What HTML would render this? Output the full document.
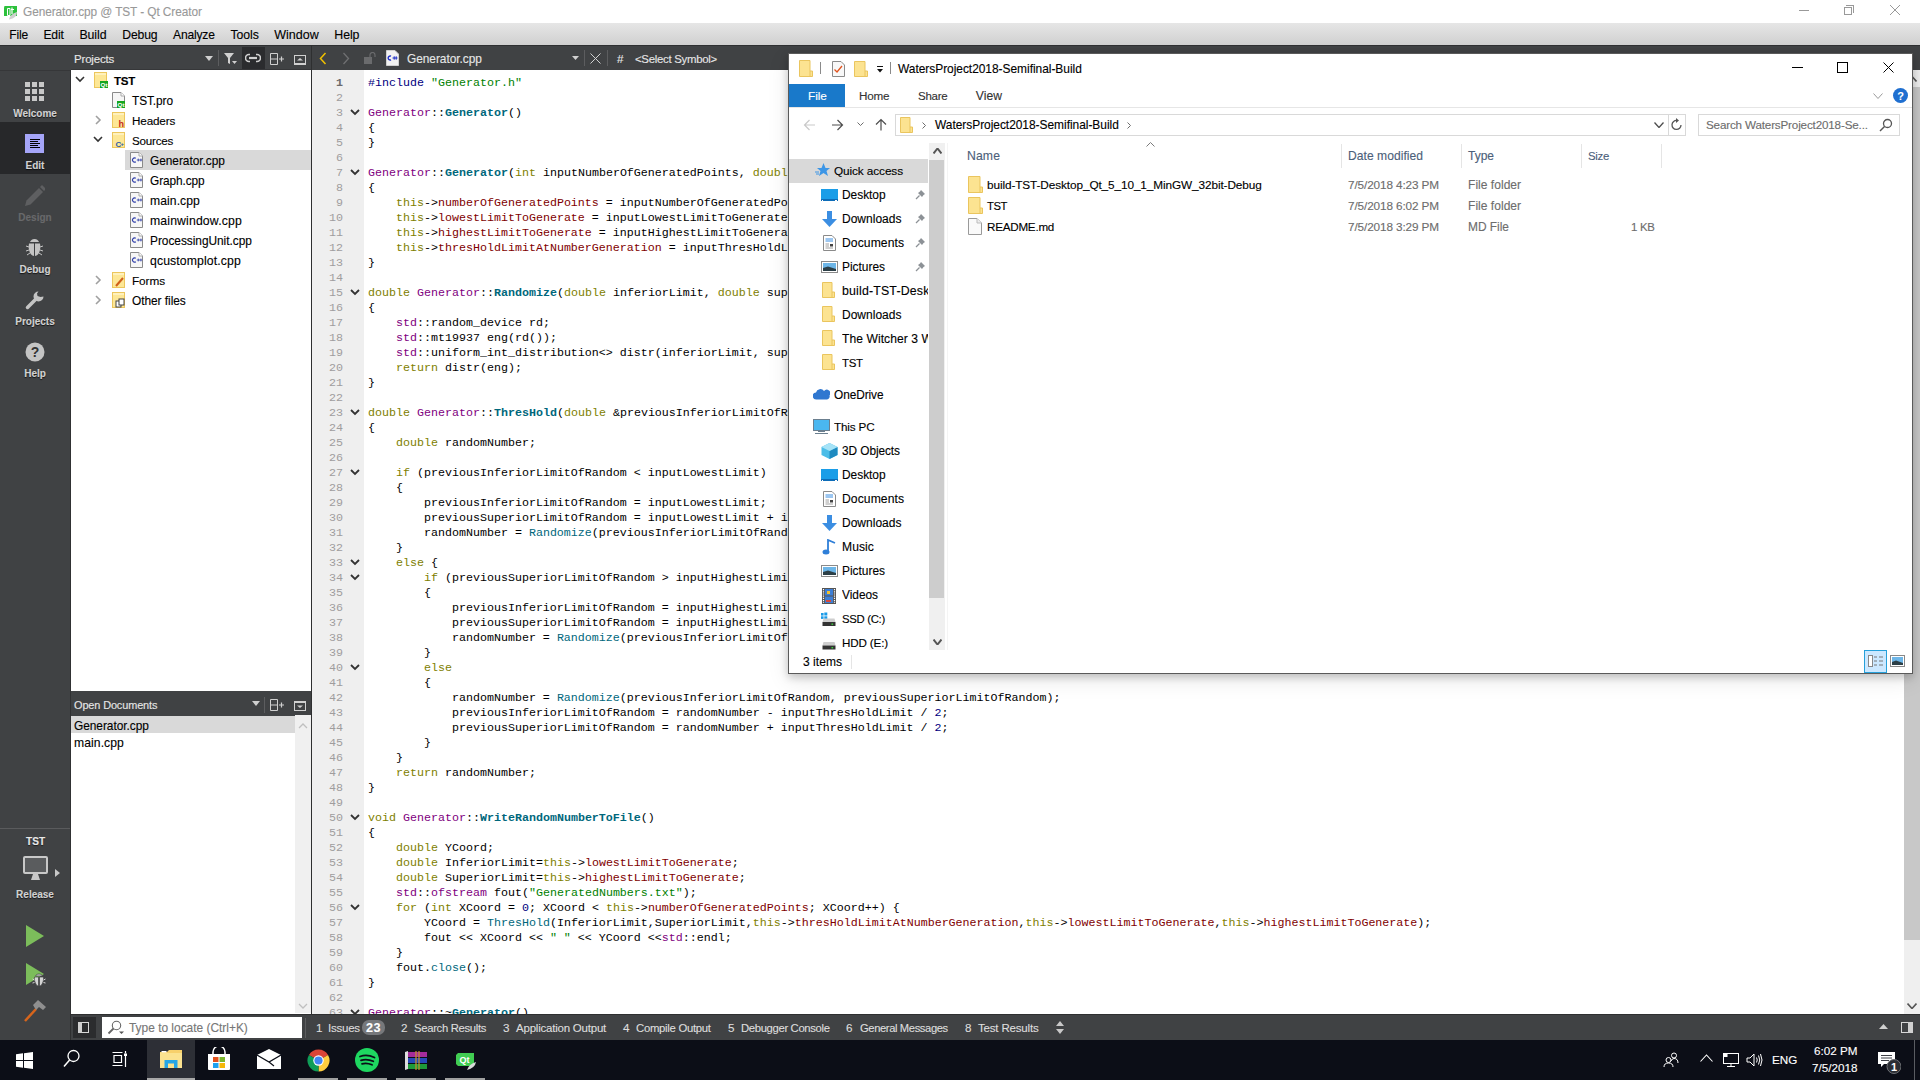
<!DOCTYPE html>
<html><head><meta charset="utf-8"><title>Qt Creator</title><style>
*{margin:0;padding:0;box-sizing:border-box}
html,body{width:1920px;height:1080px;overflow:hidden;background:#404244;font-family:"Liberation Sans",sans-serif;font-size:12px;position:relative}
.a{position:absolute}
.t{position:absolute;white-space:pre;line-height:1;-webkit-text-stroke:0.12px currentColor}
/* title & menu */
#title{left:0;top:0;width:1920px;height:23px;background:#fff}
#menu{left:0;top:23px;width:1920px;height:23px;background:linear-gradient(#e6e6e6,#d0d0d0);border-bottom:1px solid #2f3032}
#menu .t{top:5px;font-size:12.5px;color:#000}
/* dark toolbars */
#tb{left:0;top:46px;width:1920px;height:24px;background:#404244}
#modebar{left:0;top:70px;width:71px;height:944px;background:#404244;border-top:1px solid #363739}
.mode{position:absolute;left:0;width:70px;text-align:center;color:#cfcfcf;font-weight:bold;font-size:11px}
/* projects */
#proj{left:71px;top:70px;width:240px;height:621px;background:#fff}
.tr{position:absolute;font-size:12.5px;color:#000;white-space:pre;line-height:1}
#odhdr{left:71px;top:691px;width:240px;height:24px;background:#404244}
#od{left:71px;top:716px;width:240px;height:298px;background:#fff}
#split{left:311px;top:70px;width:1px;height:944px;background:#2e2f30}
/* editor */
#gutter{left:312px;top:70px;width:52px;height:944px;background:#efefef}
#editor{left:364px;top:70px;width:1540px;height:944px;background:#fff;overflow:hidden}
#lnums{position:absolute;left:313px;top:76px;width:30px;text-align:right;font-family:"Liberation Mono",monospace;font-size:11.67px;line-height:15px;color:#9f9d9e;white-space:pre}
#code{position:absolute;left:368px;top:76px;font-family:"Liberation Mono",monospace;font-size:11.67px;line-height:15px;color:#000;white-space:pre}
.k{color:#808000}.c{color:#800080}.fd{color:#00677c;font-weight:bold}.fc{color:#00677c}.fl{color:#800000}.s{color:#008000}.p{color:#000080}.n{color:#000080}
#vscroll{left:1904px;top:70px;width:16px;height:944px;background:#efefef}
/* status bar */
#status{left:70px;top:1014px;width:1850px;height:26px;background:#404244;border-top:1px solid #2e2f30;border-left:1px solid #2e2f30}
#status .t{color:#e0e0e0;font-size:12px;top:9px}
/* taskbar */
#taskbar{left:0;top:1040px;width:1920px;height:40px;background:#0c0e17}
/* explorer */
#exp{left:788px;top:53px;width:1125px;height:621px;background:#fff;border:1px solid #5a5a5a;box-shadow:0 3px 8px rgba(0,0,0,.2),0 6px 20px rgba(0,0,0,.1)}
#exp .t{color:#000;font-size:12px}

</style></head><body>
<div id="title" class="a"></div>
<svg class="a" style="left:3px;top:6px;" width="15" height="14" viewBox="0 0 15 14"><path d="M1.5 0H14V10H1V1.5Z" fill="#2dc13c"/><path d="M4.5 2.5H7V9.5H4.5Z" stroke="#fff" stroke-width="1" fill="none"/><path d="M9 1.5V8M8 3.5H11" stroke="#fff" stroke-width="1.2"/><path d="M6 13.5Q7 8 14 6Q14 12 6 13.5Z" fill="#cfcfcf"/></svg>
<div class="t" style="left:23px;top:7.00px;font-size:11.85px;color:#999;letter-spacing:-0.082px;">Generator.cpp @ TST - Qt Creator</div>
<div class="a" style="left:1799px;top:10px;width:10px;height:1px;background:#999;"></div>
<div class="a" style="left:1844px;top:7px;width:8px;height:8px;border:1px solid #999"></div>
<div class="a" style="left:1846px;top:5px;width:8px;height:8px;border-top:1px solid #999;border-right:1px solid #999"></div>
<svg class="a" style="left:1889px;top:4px" width="12" height="12"><path d="M1 1L11 11M11 1L1 11" stroke="#999" stroke-width="1"/></svg>
<div id="menu" class="a"></div>
<div class="t" style="left:9.2px;top:29.00px;font-size:12.05px;color:#000;letter-spacing:-0.163px;">File</div>
<div class="t" style="left:43.4px;top:29.00px;font-size:12.15px;color:#000;letter-spacing:-0.152px;">Edit</div>
<div class="t" style="left:79.4px;top:29.00px;font-size:12.35px;color:#000;letter-spacing:-0.06px;">Build</div>
<div class="t" style="left:122.3px;top:29.00px;font-size:12.2px;color:#000;letter-spacing:-0.164px;">Debug</div>
<div class="t" style="left:173px;top:29.00px;font-size:12.1px;color:#000;letter-spacing:-0.185px;">Analyze</div>
<div class="t" style="left:230.6px;top:29.00px;font-size:12.25px;color:#000;letter-spacing:-0.109px;">Tools</div>
<div class="t" style="left:274.2px;top:29.00px;font-size:12.5px;color:#000;letter-spacing:0.002px;">Window</div>
<div class="t" style="left:334.3px;top:29.00px;font-size:12.35px;color:#000;letter-spacing:-0.073px;">Help</div>
<div id="tb" class="a"></div>
<div id="modebar" class="a"></div>
<div class="t" style="left:74px;top:54.00px;font-size:11.55px;color:#e6e6e6;letter-spacing:-0.203px;">Projects</div>
<div id="proj" class="a"></div>
<div class="a" style="left:125px;top:150px;width:186px;height:20px;background:#d9d9d9;"></div>
<div class="t" style="left:114px;top:76.00px;font-size:11.55px;color:#000;font-weight:700;letter-spacing:-0.266px;">TST</div>
<svg class="a" style="left:94px;top:72px;" width="14" height="17" viewBox="0 0 14 17"><rect x="0.5" y="0.5" width="12" height="15" fill="#fde796" stroke="#ecc65c"/><rect x="1" y="1" width="11" height="2" fill="#fff1bd"/><rect x="6" y="9" width="8" height="7" fill="#16a51e"/><text x="6.6" y="15" font-family="Liberation Sans" font-size="6.2" font-weight="bold" fill="#fff">Qt</text></svg>
<svg class="a" style="left:75px;top:76px" width="10" height="7"><path d="M1 1L5 5L9 1" stroke="#333" stroke-width="1.6" fill="none"/></svg>
<div class="t" style="left:132px;top:96.00px;font-size:11.85px;color:#000;letter-spacing:-0.076px;">TST.pro</div>
<svg class="a" style="left:112px;top:92px;" width="14" height="17" viewBox="0 0 14 17"><path d="M0.5 0.5H9L12.5 4V15.5H0.5Z" fill="#f6f6f6" stroke="#8a8a8a"/><path d="M9 0.5V4H12.5" fill="#fff" stroke="#aaa"/><rect x="5" y="9" width="8" height="7" fill="#16a51e"/><text x="5.6" y="15" font-family="Liberation Sans" font-size="6.2" font-weight="bold" fill="#fff">Qt</text></svg>
<div class="t" style="left:132px;top:115.00px;font-size:11.7px;color:#000;letter-spacing:-0.156px;">Headers</div>
<svg class="a" style="left:112px;top:112px;" width="14" height="17" viewBox="0 0 14 17"><rect x="0.5" y="0.5" width="12" height="15" fill="#fde796" stroke="#ecc65c"/><rect x="1" y="1" width="11" height="2" fill="#fff1bd"/><text x="6.5" y="15" font-family="Liberation Sans" font-size="9" font-weight="bold" fill="#c62a20">h</text></svg>
<svg class="a" style="left:95px;top:115px" width="7" height="10"><path d="M1 1L5 5L1 9" stroke="#a0a0a0" stroke-width="1.6" fill="none"/></svg>
<div class="t" style="left:132px;top:135.00px;font-size:11.6px;color:#000;letter-spacing:-0.212px;">Sources</div>
<svg class="a" style="left:112px;top:132px;" width="14" height="17" viewBox="0 0 14 17"><rect x="0.5" y="0.5" width="12" height="15" fill="#fde796" stroke="#ecc65c"/><rect x="1" y="1" width="11" height="2" fill="#fff1bd"/><text x="3.5" y="15" font-family="Liberation Sans" font-size="8" font-weight="bold" fill="#2f5aa8">C</text><text x="8.5" y="13.5" font-family="Liberation Sans" font-size="6" font-weight="bold" fill="#2f5aa8">+</text></svg>
<svg class="a" style="left:93px;top:136px" width="10" height="7"><path d="M1 1L5 5L9 1" stroke="#333" stroke-width="1.6" fill="none"/></svg>
<div class="t" style="left:150px;top:156.00px;font-size:11.9px;color:#000;letter-spacing:-0.038px;">Generator.cpp</div>
<svg class="a" style="left:130px;top:152px;" width="14" height="17" viewBox="0 0 14 17"><path d="M0.5 0.5H9L12.5 4V15.5H0.5Z" fill="#f6f6f6" stroke="#8a8a8a"/><path d="M9 0.5V4H12.5" fill="#fff" stroke="#aaa"/><path d="M5.8 6.3A2.1 2.1 0 1 0 5.8 9.7" stroke="#2d3ca8" stroke-width="1.2" fill="none"/><path d="M6.8 8H12.2M8.3 6.6V9.4M10.9 6.6V9.4" stroke="#2d3ca8" stroke-width="0.8"/></svg>
<div class="t" style="left:150px;top:176.00px;font-size:11.85px;color:#000;letter-spacing:-0.075px;">Graph.cpp</div>
<svg class="a" style="left:130px;top:172px;" width="14" height="17" viewBox="0 0 14 17"><path d="M0.5 0.5H9L12.5 4V15.5H0.5Z" fill="#f6f6f6" stroke="#8a8a8a"/><path d="M9 0.5V4H12.5" fill="#fff" stroke="#aaa"/><path d="M5.8 6.3A2.1 2.1 0 1 0 5.8 9.7" stroke="#2d3ca8" stroke-width="1.2" fill="none"/><path d="M6.8 8H12.2M8.3 6.6V9.4M10.9 6.6V9.4" stroke="#2d3ca8" stroke-width="0.8"/></svg>
<div class="t" style="left:150px;top:195.00px;font-size:12.15px;color:#000;letter-spacing:0.082px;">main.cpp</div>
<svg class="a" style="left:130px;top:192px;" width="14" height="17" viewBox="0 0 14 17"><path d="M0.5 0.5H9L12.5 4V15.5H0.5Z" fill="#f6f6f6" stroke="#8a8a8a"/><path d="M9 0.5V4H12.5" fill="#fff" stroke="#aaa"/><path d="M5.8 6.3A2.1 2.1 0 1 0 5.8 9.7" stroke="#2d3ca8" stroke-width="1.2" fill="none"/><path d="M6.8 8H12.2M8.3 6.6V9.4M10.9 6.6V9.4" stroke="#2d3ca8" stroke-width="0.8"/></svg>
<div class="t" style="left:150px;top:215.00px;font-size:12.25px;color:#000;letter-spacing:0.14px;">mainwindow.cpp</div>
<svg class="a" style="left:130px;top:212px;" width="14" height="17" viewBox="0 0 14 17"><path d="M0.5 0.5H9L12.5 4V15.5H0.5Z" fill="#f6f6f6" stroke="#8a8a8a"/><path d="M9 0.5V4H12.5" fill="#fff" stroke="#aaa"/><path d="M5.8 6.3A2.1 2.1 0 1 0 5.8 9.7" stroke="#2d3ca8" stroke-width="1.2" fill="none"/><path d="M6.8 8H12.2M8.3 6.6V9.4M10.9 6.6V9.4" stroke="#2d3ca8" stroke-width="0.8"/></svg>
<div class="t" style="left:150px;top:236.00px;font-size:11.9px;color:#000;letter-spacing:-0.033px;">ProcessingUnit.cpp</div>
<svg class="a" style="left:130px;top:232px;" width="14" height="17" viewBox="0 0 14 17"><path d="M0.5 0.5H9L12.5 4V15.5H0.5Z" fill="#f6f6f6" stroke="#8a8a8a"/><path d="M9 0.5V4H12.5" fill="#fff" stroke="#aaa"/><path d="M5.8 6.3A2.1 2.1 0 1 0 5.8 9.7" stroke="#2d3ca8" stroke-width="1.2" fill="none"/><path d="M6.8 8H12.2M8.3 6.6V9.4M10.9 6.6V9.4" stroke="#2d3ca8" stroke-width="0.8"/></svg>
<div class="t" style="left:150px;top:255.00px;font-size:12.25px;color:#000;letter-spacing:0.115px;">qcustomplot.cpp</div>
<svg class="a" style="left:130px;top:252px;" width="14" height="17" viewBox="0 0 14 17"><path d="M0.5 0.5H9L12.5 4V15.5H0.5Z" fill="#f6f6f6" stroke="#8a8a8a"/><path d="M9 0.5V4H12.5" fill="#fff" stroke="#aaa"/><path d="M5.8 6.3A2.1 2.1 0 1 0 5.8 9.7" stroke="#2d3ca8" stroke-width="1.2" fill="none"/><path d="M6.8 8H12.2M8.3 6.6V9.4M10.9 6.6V9.4" stroke="#2d3ca8" stroke-width="0.8"/></svg>
<div class="t" style="left:132px;top:276.00px;font-size:11.8px;color:#000;letter-spacing:-0.094px;">Forms</div>
<svg class="a" style="left:112px;top:272px;" width="14" height="17" viewBox="0 0 14 17"><rect x="0.5" y="0.5" width="12" height="15" fill="#fde796" stroke="#ecc65c"/><rect x="1" y="1" width="11" height="2" fill="#fff1bd"/><path d="M4 14L11 6" stroke="#d0601a" stroke-width="2"/></svg>
<svg class="a" style="left:95px;top:275px" width="7" height="10"><path d="M1 1L5 5L1 9" stroke="#a0a0a0" stroke-width="1.6" fill="none"/></svg>
<div class="t" style="left:132px;top:296.00px;font-size:11.9px;color:#000;letter-spacing:-0.039px;">Other files</div>
<svg class="a" style="left:112px;top:292px;" width="14" height="17" viewBox="0 0 14 17"><rect x="0.5" y="0.5" width="12" height="15" fill="#fde796" stroke="#ecc65c"/><rect x="1" y="1" width="11" height="2" fill="#fff1bd"/><rect x="4" y="9" width="5" height="6" fill="#fff" stroke="#444" stroke-width="1"/><rect x="7" y="7" width="5" height="6" fill="#fff" stroke="#444" stroke-width="1"/></svg>
<svg class="a" style="left:95px;top:295px" width="7" height="10"><path d="M1 1L5 5L1 9" stroke="#a0a0a0" stroke-width="1.6" fill="none"/></svg>
<div id="odhdr" class="a"></div>
<div class="t" style="left:74px;top:700.00px;font-size:10.95px;color:#e6e6e6;letter-spacing:-0.129px;">Open Documents</div>
<div id="od" class="a"></div>
<div class="a" style="left:71px;top:716px;width:224px;height:17px;background:#d9d9d9;"></div>
<div class="t" style="left:74px;top:721.00px;font-size:11.9px;color:#000;letter-spacing:-0.038px;">Generator.cpp</div>
<div class="t" style="left:74px;top:737.00px;font-size:12.15px;color:#000;letter-spacing:0.082px;">main.cpp</div>
<div class="a" style="left:295px;top:715px;width:16px;height:298px;background:#f0f0f0;"></div>
<div id="split" class="a"></div>
<div class="a" style="left:70px;top:70px;width:1px;height:944px;background:#303133;"></div>
<div id="gutter" class="a"></div>
<div id="editor" class="a"></div>
<div id="lnums"><b style="color:#6d6b6c">1</b>
2
3
4
5
6
7
8
9
10
11
12
13
14
15
16
17
18
19
20
21
22
23
24
25
26
27
28
29
30
31
32
33
34
35
36
37
38
39
40
41
42
43
44
45
46
47
48
49
50
51
52
53
54
55
56
57
58
59
60
61
62
63</div>
<svg class="a" style="left:350px;top:109px;" width="10" height="7" viewBox="0 0 10 7"><path d="M1 1L5 5L9 1" stroke="#333" stroke-width="1.8" fill="none"/></svg><svg class="a" style="left:350px;top:169px;" width="10" height="7" viewBox="0 0 10 7"><path d="M1 1L5 5L9 1" stroke="#333" stroke-width="1.8" fill="none"/></svg><svg class="a" style="left:350px;top:289px;" width="10" height="7" viewBox="0 0 10 7"><path d="M1 1L5 5L9 1" stroke="#333" stroke-width="1.8" fill="none"/></svg><svg class="a" style="left:350px;top:409px;" width="10" height="7" viewBox="0 0 10 7"><path d="M1 1L5 5L9 1" stroke="#333" stroke-width="1.8" fill="none"/></svg><svg class="a" style="left:350px;top:469px;" width="10" height="7" viewBox="0 0 10 7"><path d="M1 1L5 5L9 1" stroke="#333" stroke-width="1.8" fill="none"/></svg><svg class="a" style="left:350px;top:559px;" width="10" height="7" viewBox="0 0 10 7"><path d="M1 1L5 5L9 1" stroke="#333" stroke-width="1.8" fill="none"/></svg><svg class="a" style="left:350px;top:574px;" width="10" height="7" viewBox="0 0 10 7"><path d="M1 1L5 5L9 1" stroke="#333" stroke-width="1.8" fill="none"/></svg><svg class="a" style="left:350px;top:664px;" width="10" height="7" viewBox="0 0 10 7"><path d="M1 1L5 5L9 1" stroke="#333" stroke-width="1.8" fill="none"/></svg><svg class="a" style="left:350px;top:814px;" width="10" height="7" viewBox="0 0 10 7"><path d="M1 1L5 5L9 1" stroke="#333" stroke-width="1.8" fill="none"/></svg><svg class="a" style="left:350px;top:904px;" width="10" height="7" viewBox="0 0 10 7"><path d="M1 1L5 5L9 1" stroke="#333" stroke-width="1.8" fill="none"/></svg><svg class="a" style="left:350px;top:1009px;" width="10" height="7" viewBox="0 0 10 7"><path d="M1 1L5 5L9 1" stroke="#333" stroke-width="1.8" fill="none"/></svg>
<div id="code"><span class="p">#include</span> <span class="s">&quot;Generator.h&quot;</span>

<span class="c">Generator</span>::<span class="fd">Generator</span>()
{
}

<span class="c">Generator</span>::<span class="fd">Generator</span>(<span class="k">int</span> inputNumberOfGeneratedPoints, <span class="k">double</span> inputLowestLimitToGenerate, <span class="k">double</span> inputHighestLimitToGenerate)
{
    <span class="k">this</span>-&gt;<span class="fl">numberOfGeneratedPoints</span> = inputNumberOfGeneratedPoints;
    <span class="k">this</span>-&gt;<span class="fl">lowestLimitToGenerate</span> = inputLowestLimitToGenerate;
    <span class="k">this</span>-&gt;<span class="fl">highestLimitToGenerate</span> = inputHighestLimitToGenerate;
    <span class="k">this</span>-&gt;<span class="fl">thresHoldLimitAtNumberGeneration</span> = inputThresHoldLimit;
}

<span class="k">double</span> <span class="c">Generator</span>::<span class="fd">Randomize</span>(<span class="k">double</span> inferiorLimit, <span class="k">double</span> superiorLimit)
{
    <span class="c">std</span>::random_device rd;
    <span class="c">std</span>::mt19937 eng(rd());
    <span class="c">std</span>::uniform_int_distribution&lt;&gt; distr(inferiorLimit, superiorLimit);
    <span class="k">return</span> distr(eng);
}

<span class="k">double</span> <span class="c">Generator</span>::<span class="fd">ThresHold</span>(<span class="k">double</span> &amp;previousInferiorLimitOfRandom, <span class="k">double</span> &amp;previousSuperiorLimitOfRandom)
{
    <span class="k">double</span> randomNumber;

    <span class="k">if</span> (previousInferiorLimitOfRandom &lt; inputLowestLimit)
    {
        previousInferiorLimitOfRandom = inputLowestLimit;
        previousSuperiorLimitOfRandom = inputLowestLimit + inputThresHoldLimit;
        randomNumber = <span class="fc">Randomize</span>(previousInferiorLimitOfRandom, previousSuperiorLimitOfRandom);
    }
    <span class="k">else</span> {
        <span class="k">if</span> (previousSuperiorLimitOfRandom &gt; inputHighestLimit)
        {
            previousInferiorLimitOfRandom = inputHighestLimit - inputThresHoldLimit;
            previousSuperiorLimitOfRandom = inputHighestLimit;
            randomNumber = <span class="fc">Randomize</span>(previousInferiorLimitOfRandom, previousSuperiorLimitOfRandom);
        }
        <span class="k">else</span>
        {
            randomNumber = <span class="fc">Randomize</span>(previousInferiorLimitOfRandom, previousSuperiorLimitOfRandom);
            previousInferiorLimitOfRandom = randomNumber - inputThresHoldLimit / <span class="n">2</span>;
            previousSuperiorLimitOfRandom = randomNumber + inputThresHoldLimit / <span class="n">2</span>;
        }
    }
    <span class="k">return</span> randomNumber;
}

<span class="k">void</span> <span class="c">Generator</span>::<span class="fd">WriteRandomNumberToFile</span>()
{
    <span class="k">double</span> YCoord;
    <span class="k">double</span> InferiorLimit=<span class="k">this</span>-&gt;<span class="fl">lowestLimitToGenerate</span>;
    <span class="k">double</span> SuperiorLimit=<span class="k">this</span>-&gt;<span class="fl">highestLimitToGenerate</span>;
    <span class="c">std</span>::<span class="c">ofstream</span> fout(<span class="s">&quot;GeneratedNumbers.txt&quot;</span>);
    <span class="k">for</span> (<span class="k">int</span> XCoord = <span class="n">0</span>; XCoord &lt; <span class="k">this</span>-&gt;<span class="fl">numberOfGeneratedPoints</span>; XCoord++) {
        YCoord = <span class="fc">ThresHold</span>(InferiorLimit,SuperiorLimit,<span class="k">this</span>-&gt;<span class="fl">thresHoldLimitAtNumberGeneration</span>,<span class="k">this</span>-&gt;<span class="fl">lowestLimitToGenerate</span>,<span class="k">this</span>-&gt;<span class="fl">highestLimitToGenerate</span>);
        fout &lt;&lt; XCoord &lt;&lt; <span class="s">&quot; &quot;</span> &lt;&lt; YCoord &lt;&lt;<span class="c">std</span>::endl;
    }
    fout.<span class="fc">close</span>();
}

<span class="c">Generator</span>::~<span class="fd">Generator</span>()</div>
<div id="vscroll" class="a"></div>
<div class="a" style="left:1904px;top:87px;width:16px;height:853px;background:#c8c8c8;"></div>
<svg class="a" style="left:1907px;top:76px;" width="10" height="6" viewBox="0 0 10 6"><path d="M0.5 5.5L5.0 0.5L9.5 5.5" stroke="#555" stroke-width="1.6" fill="none"/></svg>
<div class="t" style="left:407px;top:54.00px;font-size:11.9px;color:#e6e6e6;letter-spacing:-0.038px;">Generator.cpp</div>
<div class="t" style="left:617px;top:53.00px;font-size:11.7px;color:#e6e6e6;">#</div>
<div class="t" style="left:635px;top:54.00px;font-size:11.4px;color:#e6e6e6;letter-spacing:-0.281px;">&lt;Select Symbol&gt;</div>
<div id="status" class="a"></div>
<div class="a" style="left:102px;top:1017px;width:200px;height:21px;background:#fff;"></div>
<div class="a" style="left:73px;top:1017px;width:23px;height:21px;background:#2b2c2e;"></div>
<svg class="a" style="left:78px;top:1022px;" width="11" height="11" viewBox="0 0 11 11"><rect x="0.5" y="0.5" width="10" height="10" fill="#2b2c2e" stroke="#d8d8d8"/><rect x="0" y="0" width="4" height="11" fill="#d0d0d0"/></svg>
<svg class="a" style="left:107px;top:1020px;" width="18" height="15" viewBox="0 0 18 15"><circle cx="9.5" cy="5.5" r="4.2" stroke="#666" stroke-width="1.1" fill="none"/><path d="M6.5 8.5L1.5 13.5" stroke="#666" stroke-width="1.8"/><path d="M12 11.5H17L14.5 14Z" fill="#555"/></svg>
<div class="a" style="left:305px;top:1018px;width:1px;height:20px;background:#5c5d5f;"></div>
<div class="t" style="left:129px;top:1023.00px;font-size:11.95px;color:#777;letter-spacing:-0.012px;">Type to locate (Ctrl+K)</div>
<div class="t" style="left:316px;top:1022.00px;font-size:11.7px;color:#ddd;">1</div>
<div class="t" style="left:401px;top:1022.00px;font-size:11.7px;color:#ddd;">2</div>
<div class="t" style="left:503px;top:1022.00px;font-size:11.7px;color:#ddd;">3</div>
<div class="t" style="left:623px;top:1022.00px;font-size:11.7px;color:#ddd;">4</div>
<div class="t" style="left:728px;top:1022.00px;font-size:11.7px;color:#ddd;">5</div>
<div class="t" style="left:846px;top:1022.00px;font-size:11.7px;color:#ddd;">6</div>
<div class="t" style="left:965px;top:1022.00px;font-size:11.7px;color:#ddd;">8</div>
<div class="t" style="left:328px;top:1023.00px;font-size:11.5px;color:#ddd;letter-spacing:-0.236px;">Issues</div>
<div class="t" style="left:414px;top:1023.00px;font-size:11.3px;color:#ddd;letter-spacing:-0.324px;">Search Results</div>
<div class="t" style="left:516px;top:1023.00px;font-size:11.5px;color:#ddd;letter-spacing:-0.218px;">Application Output</div>
<div class="t" style="left:636px;top:1023.00px;font-size:11.35px;color:#ddd;letter-spacing:-0.298px;">Compile Output</div>
<div class="t" style="left:741px;top:1023.00px;font-size:11.3px;color:#ddd;letter-spacing:-0.352px;">Debugger Console</div>
<div class="t" style="left:860px;top:1023.00px;font-size:11.2px;color:#ddd;letter-spacing:-0.382px;">General Messages</div>
<div class="t" style="left:978px;top:1023.00px;font-size:11.55px;color:#ddd;letter-spacing:-0.199px;">Test Results</div>
<div class="a" style="left:362px;top:1020px;width:23px;height:15px;background:#76787b;border-radius:7px"></div>
<div class="t" style="left:366px;top:1022.00px;font-size:12.6px;color:#fff;font-weight:700;letter-spacing:0.5px;">23</div>
<div id="taskbar" class="a"></div>
<div class="a" style="left:147px;top:1040px;width:48px;height:40px;background:#2d2f36;"></div>
<div class="t" style="left:1772px;top:1054.00px;font-size:11.7px;color:#fff;">ENG</div>
<div class="t" style="left:1814px;top:1045.00px;font-size:11.7px;color:#fff;">6:02 PM</div>
<div class="t" style="left:1812px;top:1062.00px;font-size:11.7px;color:#fff;">7/5/2018</div>
<div id="exp" class="a"></div>
<div class="t" style="left:898px;top:64.00px;font-size:11.95px;color:#000;letter-spacing:-0.028px;">WatersProject2018-Semifinal-Build</div>
<div class="a" style="left:789px;top:84px;width:56px;height:23px;background:#1979ca;"></div>
<div class="t" style="left:808px;top:91.00px;font-size:11.8px;color:#fff;letter-spacing:-0.066px;">File</div>
<div class="t" style="left:859px;top:90.00px;font-size:11.7px;color:#333;letter-spacing:-0.184px;">Home</div>
<div class="t" style="left:918px;top:91.00px;font-size:11.5px;color:#333;letter-spacing:-0.247px;">Share</div>
<div class="t" style="left:975.75px;top:90.00px;font-size:12.15px;color:#333;letter-spacing:0.09px;">View</div>
<div class="a" style="left:789px;top:107px;width:1123px;height:1px;background:#e6e6e6;"></div>
<div class="a" style="left:895px;top:114px;width:791px;height:22px;border:1px solid #d9d9d9"></div>
<div class="t" style="left:935px;top:120.00px;font-size:11.95px;color:#000;letter-spacing:-0.028px;">WatersProject2018-Semifinal-Build</div>
<div class="a" style="left:1698px;top:114px;width:202px;height:22px;border:1px solid #d9d9d9"></div>
<div class="t" style="left:1706px;top:119.00px;font-size:11.65px;color:#6d6d6d;letter-spacing:-0.157px;">Search WatersProject2018-Se...</div>
<div class="a" style="left:789px;top:159px;width:139px;height:24px;background:#d9d9d9;"></div>
<div class="t" style="left:834px;top:166.00px;font-size:11.8px;color:#000;letter-spacing:-0.1px;overflow:hidden;width:94px">Quick access</div>
<div class="t" style="left:842px;top:190.00px;font-size:11.95px;color:#000;letter-spacing:-0.033px;overflow:hidden;width:86px">Desktop</div>
<div class="t" style="left:842px;top:213.00px;font-size:12.0px;color:#000;letter-spacing:0.014px;overflow:hidden;width:86px">Downloads</div>
<div class="t" style="left:842px;top:237.00px;font-size:12.15px;color:#000;letter-spacing:0.073px;overflow:hidden;width:86px">Documents</div>
<div class="t" style="left:842px;top:262.00px;font-size:11.95px;color:#000;letter-spacing:-0.016px;overflow:hidden;width:86px">Pictures</div>
<div class="t" style="left:842px;top:285.00px;font-size:12.35px;color:#000;letter-spacing:0.174px;overflow:hidden;width:86px">build-TST-Deskt</div>
<div class="t" style="left:842px;top:309.00px;font-size:12.0px;color:#000;letter-spacing:0.014px;overflow:hidden;width:86px">Downloads</div>
<div class="t" style="left:842px;top:333.00px;font-size:12.1px;color:#000;letter-spacing:0.058px;overflow:hidden;width:86px">The Witcher 3 W</div>
<div class="t" style="left:842px;top:358.00px;font-size:11.45px;color:#000;letter-spacing:-0.319px;overflow:hidden;width:86px">TST</div>
<div class="t" style="left:834px;top:390.00px;font-size:11.85px;color:#000;letter-spacing:-0.074px;overflow:hidden;width:94px">OneDrive</div>
<div class="t" style="left:834px;top:421.00px;font-size:11.7px;color:#000;letter-spacing:-0.149px;overflow:hidden;width:94px">This PC</div>
<div class="t" style="left:842px;top:446.00px;font-size:11.85px;color:#000;letter-spacing:-0.067px;overflow:hidden;width:86px">3D Objects</div>
<div class="t" style="left:842px;top:470.00px;font-size:11.95px;color:#000;letter-spacing:-0.033px;overflow:hidden;width:86px">Desktop</div>
<div class="t" style="left:842px;top:493.00px;font-size:12.15px;color:#000;letter-spacing:0.073px;overflow:hidden;width:86px">Documents</div>
<div class="t" style="left:842px;top:517.00px;font-size:12.0px;color:#000;letter-spacing:0.014px;overflow:hidden;width:86px">Downloads</div>
<div class="t" style="left:842px;top:541.00px;font-size:12.1px;color:#000;letter-spacing:0.072px;overflow:hidden;width:86px">Music</div>
<div class="t" style="left:842px;top:566.00px;font-size:11.95px;color:#000;letter-spacing:-0.016px;overflow:hidden;width:86px">Pictures</div>
<div class="t" style="left:842px;top:590.00px;font-size:11.9px;color:#000;letter-spacing:-0.031px;overflow:hidden;width:86px">Videos</div>
<div class="t" style="left:842px;top:614.00px;font-size:11.35px;color:#000;letter-spacing:-0.305px;overflow:hidden;width:86px">SSD (C:)</div>
<div class="t" style="left:842px;top:637.00px;font-size:11.65px;color:#000;letter-spacing:-0.158px;overflow:hidden;width:86px">HDD (E:)</div>
<div class="a" style="left:929px;top:143px;width:16px;height:507px;background:#f0f0f0;"></div>
<div class="a" style="left:929px;top:160px;width:15px;height:438px;background:#cdcdcd;"></div>
<div class="a" style="left:947px;top:143px;width:1px;height:507px;background:#f4f4f4;"></div>
<div class="t" style="left:967px;top:150.00px;font-size:12.2px;color:#4c607a;letter-spacing:0.133px;">Name</div>
<div class="t" style="left:1348px;top:150.00px;font-size:12.1px;color:#4c607a;letter-spacing:0.035px;">Date modified</div>
<div class="t" style="left:1468px;top:150.00px;font-size:12.0px;color:#4c607a;letter-spacing:-0.004px;">Type</div>
<div class="t" style="left:1588px;top:151.00px;font-size:11.4px;color:#4c607a;letter-spacing:-0.285px;">Size</div>
<div class="t" style="left:987px;top:180.00px;font-size:11.8px;color:#000;letter-spacing:-0.104px;">build-TST-Desktop_Qt_5_10_1_MinGW_32bit-Debug</div>
<div class="t" style="left:1348px;top:179.00px;font-size:11.75px;color:#6d6d6d;letter-spacing:-0.108px;">7/5/2018 4:23 PM</div>
<div class="t" style="left:1468px;top:179.00px;font-size:12.05px;color:#6d6d6d;letter-spacing:0.018px;">File folder</div>
<div class="t" style="left:987px;top:201.00px;font-size:11.25px;color:#000;letter-spacing:-0.422px;">TST</div>
<div class="t" style="left:1348px;top:200.00px;font-size:11.75px;color:#6d6d6d;letter-spacing:-0.108px;">7/5/2018 6:02 PM</div>
<div class="t" style="left:1468px;top:200.00px;font-size:12.05px;color:#6d6d6d;letter-spacing:0.018px;">File folder</div>
<div class="t" style="left:987px;top:221.00px;font-size:11.65px;color:#000;letter-spacing:-0.234px;">README.md</div>
<div class="t" style="left:1348px;top:221.00px;font-size:11.75px;color:#6d6d6d;letter-spacing:-0.108px;">7/5/2018 3:29 PM</div>
<div class="t" style="left:1468px;top:222.00px;font-size:11.95px;color:#6d6d6d;letter-spacing:-0.018px;">MD File</div>
<div class="t" style="left:1631px;top:222.00px;font-size:11.4px;color:#6d6d6d;letter-spacing:-0.309px;">1 KB</div>
<div class="t" style="left:803px;top:656.00px;font-size:12.05px;color:#000;letter-spacing:0.025px;">3 items</div>
<div class="a" style="left:0px;top:122px;width:70px;height:52px;background:#27282a;"></div>
<svg class="a" style="left:25px;top:82px;" width="19" height="19" viewBox="0 0 19 19"><rect x="0" y="0" width="5" height="5" fill="#c8c8c8"/><rect x="0" y="7" width="5" height="5" fill="#c8c8c8"/><rect x="0" y="14" width="5" height="5" fill="#c8c8c8"/><rect x="7" y="0" width="5" height="5" fill="#c8c8c8"/><rect x="7" y="7" width="5" height="5" fill="#c8c8c8"/><rect x="7" y="14" width="5" height="5" fill="#c8c8c8"/><rect x="14" y="0" width="5" height="5" fill="#c8c8c8"/><rect x="14" y="7" width="5" height="5" fill="#c8c8c8"/><rect x="14" y="14" width="5" height="5" fill="#c8c8c8"/></svg>
<div class="t" style="left:35px;top:109.00px;font-size:10.0px;color:#d2d2d2;font-weight:700;transform:translateX(-50%);text-shadow:0 1px 1px rgba(0,0,0,.7)">Welcome</div>
<svg class="a" style="left:25px;top:134px;" width="19" height="19" viewBox="0 0 19 19"><rect x="0" y="0" width="19" height="19" fill="#a5a5f8"/><rect x="5" y="5" width="10" height="1" fill="#000"/><rect x="5" y="7" width="8" height="1" fill="#000"/><rect x="5" y="9" width="10" height="1" fill="#000"/><rect x="5" y="11" width="8" height="1" fill="#000"/><rect x="5" y="13" width="10" height="1" fill="#000"/></svg>
<div class="t" style="left:35px;top:161.00px;font-size:10.0px;color:#d2d2d2;font-weight:700;transform:translateX(-50%);text-shadow:0 1px 1px rgba(0,0,0,.7)">Edit</div>
<svg class="a" style="left:24px;top:185px;" width="21" height="22" viewBox="0 0 21 22"><path d="M1 21L2.5 15.5L15 3L19 7L6.5 19.5Z" fill="#5e5f61"/><path d="M16 2L18 0L22 4L20 6Z" fill="#5e5f61"/></svg>
<div class="t" style="left:35px;top:213.00px;font-size:10.0px;color:#68696b;font-weight:700;transform:translateX(-50%)">Design</div>
<svg class="a" style="left:25px;top:237px;" width="19" height="20" viewBox="0 0 19 20"><path d="M9.5 2C7 2 5.5 3.5 5 5L14 5C13.5 3.5 12 2 9.5 2Z" fill="#c4c4c4"/><path d="M4 6.5C3.5 9 3.5 13 5 16C6 18 8 19 9 19V6.5Z M10 6.5V19C11 19 13 18 14 16C15.5 13 15.5 9 15 6.5Z" fill="#c4c4c4"/><path d="M1 9L4 10M1 14L4 13M18 9L15 10M18 14L15 13M2 18L5 16M17 18L14 16" stroke="#c4c4c4" stroke-width="1"/></svg>
<div class="t" style="left:35px;top:265.00px;font-size:10.0px;color:#d2d2d2;font-weight:700;transform:translateX(-50%);text-shadow:0 1px 1px rgba(0,0,0,.7)">Debug</div>
<svg class="a" style="left:25px;top:290px;" width="19" height="20" viewBox="0 0 19 20"><path d="M2.5 17.5L10 10" stroke="#c4c4c4" stroke-width="3.5" stroke-linecap="round"/><path d="M13.5 1.5A5 5 0 1 0 18.5 6.5L15.5 7L12.5 6L12 3.5Z" fill="#c4c4c4"/></svg>
<div class="t" style="left:35px;top:317.00px;font-size:10.0px;color:#d2d2d2;font-weight:700;transform:translateX(-50%);text-shadow:0 1px 1px rgba(0,0,0,.7)">Projects</div>
<svg class="a" style="left:25px;top:342px;" width="20" height="20" viewBox="0 0 20 20"><circle cx="10" cy="10" r="9.5" fill="#c4c4c4"/><text x="10" y="15" text-anchor="middle" font-family="Liberation Sans" font-weight="bold" font-size="14" fill="#333">?</text></svg>
<div class="t" style="left:35px;top:369.00px;font-size:10.0px;color:#d2d2d2;font-weight:700;transform:translateX(-50%);text-shadow:0 1px 1px rgba(0,0,0,.7)">Help</div>
<div class="a" style="left:0px;top:828px;width:70px;height:1px;background:#5a5b5d;"></div>
<div class="t" style="left:26px;top:837.00px;font-size:10.05px;color:#e8e8e8;font-weight:700;letter-spacing:0.021px;text-shadow:0 1px 1px rgba(0,0,0,.6)">TST</div>
<svg class="a" style="left:23px;top:856px;" width="25" height="25" viewBox="0 0 25 25"><rect x="1" y="1" width="23" height="16" rx="1" fill="#5a5c5e" stroke="#c8c8c8" stroke-width="2"/><path d="M8 24L10 18H15L17 24Z" fill="#c8c8c8"/></svg>
<svg class="a" style="left:55px;top:869px;" width="5" height="8" viewBox="0 0 5 8"><path d="M0 0L5 4L0 8Z" fill="#c8c8c8"/></svg>
<div class="t" style="left:35px;top:890.00px;font-size:10.0px;color:#d2d2d2;font-weight:700;transform:translateX(-50%);text-shadow:0 1px 1px rgba(0,0,0,.7)">Release</div>
<svg class="a" style="left:26px;top:925px;" width="18" height="22" viewBox="0 0 18 22"><path d="M0 0L18 11L0 22Z" fill="#7cbd5b"/></svg>
<svg class="a" style="left:26px;top:963px;" width="22" height="25" viewBox="0 0 22 25"><path d="M0 0L18 11L0 22Z" fill="#7cbd5b"/><path d="M13 11C11 11 10 12 9.5 13H16.5C16 12 15 11 13 11Z M8.5 14C8 18 10 23 12.5 23V14Z M13.5 14V23C16 23 18 18 17.5 14Z" fill="#d4d4d4" stroke="#404244" stroke-width="0.7"/><path d="M6.5 16L8.5 17M6.5 20L8.5 19.5M19.5 16L17.5 17M19.5 20L17.5 19.5" stroke="#d4d4d4" stroke-width="1"/></svg>
<svg class="a" style="left:22px;top:1000px;" width="26" height="22" viewBox="0 0 26 22"><path d="M3 21L14 9" stroke="#d7651c" stroke-width="2.5"/><path d="M11 5L16 0L24 7L21 10L17 7L14 10Z" fill="#8f8f8f"/></svg>
<div class="a" style="left:71px;top:69px;width:240px;height:1px;background:#363739;"></div>
<svg class="a" style="left:205px;top:56px;" width="8" height="5" viewBox="0 0 8 5"><path d="M0 0H8L4 5Z" fill="#d0d0d0"/></svg>
<div class="a" style="left:218px;top:50px;width:1px;height:16px;background:#5c5d5f;"></div>
<svg class="a" style="left:224px;top:53px;" width="13" height="12" viewBox="0 0 13 12"><path d="M0 0H10L6 5V11L4 10V5Z" fill="#d0d0d0"/><path d="M8 8H13L10.5 11Z" fill="#d0d0d0"/></svg>
<div class="a" style="left:242px;top:47px;width:23px;height:22px;background:#2b2c2e;"></div>
<svg class="a" style="left:245px;top:53px;" width="16" height="10" viewBox="0 0 16 10"><path d="M5 1.5H4A3.5 3.5 0 0 0 4 8.5H5 M11 1.5H12A3.5 3.5 0 0 1 12 8.5H11" stroke="#d0d0d0" stroke-width="1.6" fill="none"/><path d="M4 5H12" stroke="#d0d0d0" stroke-width="2.2"/></svg>
<svg class="a" style="left:270px;top:53px;" width="15" height="12" viewBox="0 0 15 12"><path d="M0.5 0.5H7.5V11.5H0.5Z M0.5 6H7.5" stroke="#d0d0d0" stroke-width="1" fill="none"/><path d="M9 6H14M11.5 3.5V8.5" stroke="#d0d0d0" stroke-width="1.2"/></svg>
<svg class="a" style="left:294px;top:55px;" width="12" height="10" viewBox="0 0 12 10"><rect x="0.5" y="0.5" width="11" height="9" stroke="#d0d0d0" fill="none"/><rect x="0" y="8" width="12" height="2" fill="#d0d0d0"/><path d="M3 5.5H9L6 3Z" fill="#d0d0d0"/></svg>
<div class="a" style="left:311px;top:45px;width:1px;height:25px;background:#2e2f30;"></div>
<svg class="a" style="left:319px;top:52px;" width="8" height="13" viewBox="0 0 8 13"><path d="M6.5 1L1.5 6.5L6.5 12" stroke="#f0c000" stroke-width="1.5" fill="none"/></svg>
<svg class="a" style="left:342px;top:52px;" width="8" height="13" viewBox="0 0 8 13"><path d="M1.5 1L6.5 6.5L1.5 12" stroke="#6f7072" stroke-width="1.3" fill="none"/></svg>
<svg class="a" style="left:364px;top:52px;" width="12" height="12" viewBox="0 0 12 12"><rect x="0" y="5" width="8" height="7" fill="#6a6b6d"/><path d="M6 5V3A2.5 2.5 0 0 1 11 3V5" stroke="#6a6b6d" stroke-width="1.2" fill="none"/></svg>
<svg class="a" style="left:386px;top:50px;" width="14" height="17" viewBox="0 0 14 17"><path d="M0.5 0.5H9L12.5 4V15.5H0.5Z" fill="#f2f2f2" stroke="#d0d0d0"/><path d="M5 6.2A2 2 0 1 0 5 9.8" stroke="#1b2bc4" stroke-width="1.4" fill="none"/><path d="M6.5 8H11.5M8.2 6.3V9.7M10.2 6.3V9.7" stroke="#1b2bc4" stroke-width="1"/></svg>
<svg class="a" style="left:572px;top:56px;" width="7" height="5" viewBox="0 0 7 5"><path d="M0 0H7L3.5 4Z" fill="#d0d0d0"/></svg>
<div class="a" style="left:584px;top:50px;width:1px;height:16px;background:#5c5d5f;"></div>
<svg class="a" style="left:590px;top:53px;" width="11" height="11" viewBox="0 0 11 11"><path d="M0.5 0.5L10.5 10.5M10.5 0.5L0.5 10.5" stroke="#d0d0d0" stroke-width="1"/></svg>
<div class="a" style="left:607px;top:50px;width:1px;height:16px;background:#5c5d5f;"></div>
<svg class="a" style="left:252px;top:701px;" width="8" height="5" viewBox="0 0 8 5"><path d="M0 0H8L4 5Z" fill="#d0d0d0"/></svg>
<div class="a" style="left:264px;top:697px;width:1px;height:16px;background:#5c5d5f;"></div>
<svg class="a" style="left:270px;top:699px;" width="15" height="12" viewBox="0 0 15 12"><path d="M0.5 0.5H7.5V11.5H0.5Z M0.5 6H7.5" stroke="#d0d0d0" stroke-width="1" fill="none"/><path d="M9 6H14M11.5 3.5V8.5" stroke="#d0d0d0" stroke-width="1.2"/></svg>
<svg class="a" style="left:294px;top:701px;" width="12" height="10" viewBox="0 0 12 10"><rect x="0.5" y="0.5" width="11" height="9" stroke="#d0d0d0" fill="none"/><rect x="0" y="0" width="12" height="2" fill="#d0d0d0"/><path d="M3 4.5H9L6 7Z" fill="#d0d0d0"/></svg>
<svg class="a" style="left:298px;top:723px;" width="10" height="6" viewBox="0 0 10 6"><path d="M1 5L5 1L9 5" stroke="#c0c0c0" stroke-width="1.3" fill="none"/></svg>
<svg class="a" style="left:298px;top:1003px;" width="10" height="6" viewBox="0 0 10 6"><path d="M1 1L5 5L9 1" stroke="#c0c0c0" stroke-width="1.3" fill="none"/></svg>
<svg class="a" style="left:799px;top:60px;" width="14" height="17" viewBox="0 0 14 17"><path d="M0.5 0.5H11V11H13.5V16.5H0.5Z" fill="#fce391" stroke="#eac55e"/><path d="M11 11V16.5" stroke="#eac55e"/></svg>
<div class="a" style="left:820px;top:62px;width:1px;height:12px;background:#8a8a8a;"></div>
<svg class="a" style="left:832px;top:61px;" width="13" height="16" viewBox="0 0 13 16"><path d="M0.5 0.5H9L12.5 4V15.5H0.5Z" fill="#f8f8f8" stroke="#8a8a8a"/><path d="M2.5 8.5L5 11L10 5" stroke="#e0521d" stroke-width="1.3" fill="none"/></svg>
<svg class="a" style="left:854px;top:61px;" width="14" height="16" viewBox="0 0 14 16"><path d="M0.5 0.5H11V10H13.5V15.5H0.5Z" fill="#fce391" stroke="#eac55e"/><path d="M11 10V15.5" stroke="#eac55e"/></svg>
<svg class="a" style="left:877px;top:66px;" width="6" height="7" viewBox="0 0 6 7"><rect x="0" y="0" width="6" height="1" fill="#111"/><path d="M0 3H6L3 6.5Z" fill="#111"/></svg>
<div class="a" style="left:890px;top:62px;width:1px;height:12px;background:#8a8a8a;"></div>
<div class="a" style="left:1792px;top:67px;width:11px;height:1px;background:#000;"></div>
<div class="a" style="left:1837px;top:62px;width:11px;height:11px;border:1px solid #000"></div>
<svg class="a" style="left:1883px;top:62px;" width="11" height="11" viewBox="0 0 11 11"><path d="M0.5 0.5L10.5 10.5M10.5 0.5L0.5 10.5" stroke="#000" stroke-width="1"/></svg>
<svg class="a" style="left:1873px;top:93px;" width="10" height="6" viewBox="0 0 10 6"><path d="M0.5 0.5L5.0 5.5L9.5 0.5" stroke="#9a9a9a" stroke-width="1" fill="none"/></svg>
<svg class="a" style="left:1893px;top:88px;" width="15" height="15" viewBox="0 0 15 15"><circle cx="7.5" cy="7.5" r="7.5" fill="#1f6fd0"/><text x="7.5" y="12" text-anchor="middle" font-family="Liberation Sans" font-weight="bold" font-size="11" fill="#fff">?</text></svg>
<svg class="a" style="left:803px;top:119px;" width="13" height="12" viewBox="0 0 13 12"><path d="M12 6H1.5M6.5 1L1.5 6L6.5 11" stroke="#c9c9c9" stroke-width="1.2" fill="none"/></svg>
<svg class="a" style="left:831px;top:119px;" width="13" height="12" viewBox="0 0 13 12"><path d="M1 6H11.5M6.5 1L11.5 6L6.5 11" stroke="#4d4d4d" stroke-width="1.2" fill="none"/></svg>
<svg class="a" style="left:857px;top:122px;" width="7" height="4" viewBox="0 0 7 4"><path d="M0.5 0.5L3.5 3.5L6.5 0.5" stroke="#6d6d6d" stroke-width="1" fill="none"/></svg>
<svg class="a" style="left:875px;top:118px;" width="12" height="13" viewBox="0 0 12 13"><path d="M6 12.5V1.5M1 6.5L6 1.5L11 6.5" stroke="#4d4d4d" stroke-width="1.2" fill="none"/></svg>
<svg class="a" style="left:900px;top:117px;" width="13" height="16" viewBox="0 0 13 16"><path d="M0.5 0.5H10V10H12.5V15.5H0.5Z" fill="#fce391" stroke="#eac55e"/><path d="M10 10V15.5" stroke="#eac55e"/></svg>
<svg class="a" style="left:922px;top:122px;" width="4" height="7" viewBox="0 0 4 7"><path d="M0.5 0.5L3.5 3.5L0.5 6.5" stroke="#6d6d6d" stroke-width="1" fill="none"/></svg>
<svg class="a" style="left:1127px;top:122px;" width="4" height="7" viewBox="0 0 4 7"><path d="M0.5 0.5L3.5 3.5L0.5 6.5" stroke="#6d6d6d" stroke-width="1" fill="none"/></svg>
<svg class="a" style="left:1654px;top:122px;" width="10" height="6" viewBox="0 0 10 6"><path d="M0.5 0.5L5.0 5.5L9.5 0.5" stroke="#4d4d4d" stroke-width="1.3" fill="none"/></svg>
<div class="a" style="left:1668px;top:114px;width:1px;height:22px;background:#d9d9d9;"></div>
<svg class="a" style="left:1670px;top:118px;" width="14" height="14" viewBox="0 0 14 14"><path d="M11 7A4.5 4.5 0 1 1 7 2.5" stroke="#555" stroke-width="1.3" fill="none"/><path d="M6 0L9 2.5L6 5Z" fill="#555"/></svg>
<svg class="a" style="left:1879px;top:118px;" width="14" height="14" viewBox="0 0 14 14"><circle cx="8.5" cy="5.5" r="4" stroke="#555" stroke-width="1.3" fill="none"/><path d="M5.5 8.5L1 13" stroke="#555" stroke-width="1.5"/></svg>
<svg class="a" style="left:933px;top:148px;" width="9" height="6" viewBox="0 0 9 6"><path d="M0.5 5.5L4.5 0.5L8.5 5.5" stroke="#555" stroke-width="2" fill="none"/></svg>
<svg class="a" style="left:933px;top:639px;" width="9" height="6" viewBox="0 0 9 6"><path d="M0.5 0.5L4.5 5.5L8.5 0.5" stroke="#555" stroke-width="2" fill="none"/></svg>
<svg class="a" style="left:815px;top:163px;" width="15" height="14" viewBox="0 0 15 14"><path d="M8.5 0L10.5 5H15L11.5 8L13 13L8.5 10L4 13L5.5 8L2 5H6.5Z" fill="#3d96e6"/><path d="M0 9H4M1 11H4" stroke="#3d96e6" stroke-width="1"/></svg>
<svg class="a" style="left:821px;top:189px;" width="17" height="13" viewBox="0 0 17 13"><rect x="0" y="0" width="17" height="12" fill="#1a9de8"/><rect x="0" y="10" width="17" height="2" fill="#0d6cb8"/><rect x="1" y="11" width="1" height="1" fill="#fff"/><rect x="14" y="11" width="2" height="1" fill="#fff"/></svg>
<svg class="a" style="left:915px;top:189px;" width="11" height="11" viewBox="0 0 11 11"><path d="M6 1L10 5L8.5 6L7 8L3 4L5 2.5Z" fill="#8c9196"/><path d="M4.5 6.5L1 10" stroke="#8c9196" stroke-width="1.2"/></svg>
<svg class="a" style="left:821px;top:211px;" width="17" height="17" viewBox="0 0 17 17"><path d="M6 0H11V8H16L8.5 16L1 8H6Z" fill="#3b8ee2"/></svg>
<svg class="a" style="left:915px;top:213px;" width="11" height="11" viewBox="0 0 11 11"><path d="M6 1L10 5L8.5 6L7 8L3 4L5 2.5Z" fill="#8c9196"/><path d="M4.5 6.5L1 10" stroke="#8c9196" stroke-width="1.2"/></svg>
<svg class="a" style="left:823px;top:235px;" width="13" height="16" viewBox="0 0 13 16"><path d="M0.5 0.5H9L12.5 4V15.5H0.5Z" fill="#fff" stroke="#8a8a8a"/><path d="M2.5 4H10M2.5 6H10" stroke="#3b8ee2" stroke-width="1"/><path d="M2.5 9H6M2.5 11H6M2.5 13H10" stroke="#888" stroke-width="0.8"/><rect x="7" y="9" width="3" height="2.5" fill="#444"/></svg>
<svg class="a" style="left:915px;top:237px;" width="11" height="11" viewBox="0 0 11 11"><path d="M6 1L10 5L8.5 6L7 8L3 4L5 2.5Z" fill="#8c9196"/><path d="M4.5 6.5L1 10" stroke="#8c9196" stroke-width="1.2"/></svg>
<svg class="a" style="left:821px;top:261px;" width="17" height="12" viewBox="0 0 17 12"><rect x="0.5" y="0.5" width="16" height="11" fill="#fff" stroke="#8a8a8a"/><rect x="2" y="2" width="13" height="8" fill="#6db6e8"/><path d="M2 7L7 5.5L15 8V10H2Z" fill="#2c3f47"/></svg>
<svg class="a" style="left:915px;top:261px;" width="11" height="11" viewBox="0 0 11 11"><path d="M6 1L10 5L8.5 6L7 8L3 4L5 2.5Z" fill="#8c9196"/><path d="M4.5 6.5L1 10" stroke="#8c9196" stroke-width="1.2"/></svg>
<svg class="a" style="left:822px;top:282px;" width="13" height="16" viewBox="0 0 13 16"><path d="M0.5 0.5H10V10H12.5V15.5H0.5Z" fill="#fce391" stroke="#eac55e"/><path d="M10 10V15.5" stroke="#eac55e"/></svg>
<svg class="a" style="left:822px;top:306px;" width="13" height="16" viewBox="0 0 13 16"><path d="M0.5 0.5H10V10H12.5V15.5H0.5Z" fill="#fce391" stroke="#eac55e"/><path d="M10 10V15.5" stroke="#eac55e"/></svg>
<svg class="a" style="left:822px;top:330px;" width="13" height="16" viewBox="0 0 13 16"><path d="M0.5 0.5H10V10H12.5V15.5H0.5Z" fill="#fce391" stroke="#eac55e"/><path d="M10 10V15.5" stroke="#eac55e"/></svg>
<svg class="a" style="left:822px;top:354px;" width="13" height="16" viewBox="0 0 13 16"><path d="M0.5 0.5H10V10H12.5V15.5H0.5Z" fill="#fce391" stroke="#eac55e"/><path d="M10 10V15.5" stroke="#eac55e"/></svg>
<svg class="a" style="left:813px;top:388px;" width="17" height="12" viewBox="0 0 17 12"><path d="M3.5 11.5A3.5 3.5 0 0 1 3 4.5A4.5 4.5 0 0 1 11 3A3.5 3.5 0 0 1 16.5 7.5A3 3 0 0 1 14 11.5Z" fill="#2f77d0"/></svg>
<svg class="a" style="left:813px;top:419px;" width="17" height="15" viewBox="0 0 17 15"><rect x="0.5" y="0.5" width="16" height="11" fill="#4ab7f0" stroke="#6b7f8f"/><rect x="5" y="12" width="7" height="1" fill="#6b7f8f"/><rect x="2" y="14" width="13" height="1" fill="#6b7f8f"/></svg>
<svg class="a" style="left:821px;top:443px;" width="17" height="16" viewBox="0 0 17 16"><path d="M8.5 0L16.5 4V12L8.5 16L0.5 12V4Z" fill="#4bbde8"/><path d="M8.5 8L16.5 4V12L8.5 16Z" fill="#1e8ac0"/><path d="M8.5 8L0.5 4L8.5 0L16.5 4Z" fill="#a6e3f7"/></svg>
<svg class="a" style="left:821px;top:469px;" width="17" height="13" viewBox="0 0 17 13"><rect x="0" y="0" width="17" height="12" fill="#1a9de8"/><rect x="0" y="10" width="17" height="2" fill="#0d6cb8"/><rect x="1" y="11" width="1" height="1" fill="#fff"/><rect x="14" y="11" width="2" height="1" fill="#fff"/></svg>
<svg class="a" style="left:823px;top:491px;" width="13" height="16" viewBox="0 0 13 16"><path d="M0.5 0.5H9L12.5 4V15.5H0.5Z" fill="#fff" stroke="#8a8a8a"/><path d="M2.5 4H10M2.5 6H10" stroke="#3b8ee2" stroke-width="1"/><path d="M2.5 9H6M2.5 11H6M2.5 13H10" stroke="#888" stroke-width="0.8"/><rect x="7" y="9" width="3" height="2.5" fill="#444"/></svg>
<svg class="a" style="left:821px;top:515px;" width="17" height="17" viewBox="0 0 17 17"><path d="M6 0H11V8H16L8.5 16L1 8H6Z" fill="#3b8ee2"/></svg>
<svg class="a" style="left:822px;top:539px;" width="14" height="16" viewBox="0 0 14 16"><path d="M6 13V1L13 4" stroke="#2f7fd8" stroke-width="1.8" fill="none"/><ellipse cx="4" cy="13" rx="3.5" ry="2.5" fill="#2f7fd8"/></svg>
<svg class="a" style="left:821px;top:565px;" width="17" height="12" viewBox="0 0 17 12"><rect x="0.5" y="0.5" width="16" height="11" fill="#fff" stroke="#8a8a8a"/><rect x="2" y="2" width="13" height="8" fill="#6db6e8"/><path d="M2 7L7 5.5L15 8V10H2Z" fill="#2c3f47"/></svg>
<svg class="a" style="left:822px;top:588px;" width="14" height="16" viewBox="0 0 14 16"><rect x="0" y="0" width="14" height="16" fill="#555"/><rect x="3" y="1" width="8" height="6.5" fill="#3d7fd6"/><rect x="3" y="8.5" width="8" height="6.5" fill="#3d7fd6"/><rect x="5" y="3" width="3" height="3" fill="#f2c12e"/><rect x="4" y="12" width="5" height="2" fill="#d84a3a"/><path d="M1.5 1V15M12.5 1V15" stroke="#fff" stroke-width="1.2" stroke-dasharray="1.2 1"/></svg>
<svg class="a" style="left:821px;top:612px;" width="15" height="14" viewBox="0 0 15 14"><rect x="0" y="1" width="2.6" height="2.6" fill="#1a9be8"/><rect x="3.3" y="0.5" width="3" height="3" fill="#1a9be8"/><rect x="0" y="4.3" width="2.6" height="2.6" fill="#1a9be8"/><rect x="3.3" y="4.3" width="3" height="3" fill="#1a9be8"/><g transform="translate(1,6.5)"><path d="M1.5 0H12.5L13.5 3.5H0.5Z" fill="#cfcfcf"/><rect x="0.5" y="3.5" width="13" height="4" fill="#333"/><rect x="9.5" y="5" width="1.6" height="1.4" fill="#3bd23b"/></g></svg>
<svg class="a" style="left:822px;top:642px;" width="15" height="9" viewBox="0 0 15 9"><path d="M1.5 0H12.5L13.5 3.5H0.5Z" fill="#cfcfcf"/><rect x="0.5" y="3.5" width="13" height="4" fill="#333"/><rect x="9.5" y="5" width="1.6" height="1.4" fill="#3bd23b"/></svg>
<svg class="a" style="left:1146px;top:142px;" width="9" height="5" viewBox="0 0 9 5"><path d="M0.5 4.5L4.5 0.5L8.5 4.5" stroke="#7a7a7a" stroke-width="1" fill="none"/></svg>
<div class="a" style="left:1341px;top:144px;width:1px;height:24px;background:#e5e5e5;"></div>
<div class="a" style="left:1461px;top:144px;width:1px;height:24px;background:#e5e5e5;"></div>
<div class="a" style="left:1581px;top:144px;width:1px;height:24px;background:#e5e5e5;"></div>
<div class="a" style="left:1661px;top:144px;width:1px;height:24px;background:#e5e5e5;"></div>
<svg class="a" style="left:968px;top:176px;" width="15" height="17" viewBox="0 0 15 17"><path d="M0.5 0.5H12V11H14.5V16.5H0.5Z" fill="#fce391" stroke="#eac55e"/><path d="M12 11V16.5" stroke="#eac55e"/></svg>
<svg class="a" style="left:968px;top:197px;" width="15" height="17" viewBox="0 0 15 17"><path d="M0.5 0.5H12V11H14.5V16.5H0.5Z" fill="#fce391" stroke="#eac55e"/><path d="M12 11V16.5" stroke="#eac55e"/></svg>
<svg class="a" style="left:968px;top:218px;" width="14" height="17" viewBox="0 0 14 17"><path d="M0.5 0.5H9L13.5 5V16.5H0.5Z" fill="#fafafa" stroke="#9a9a9a"/><path d="M9 0.5V5H13.5" fill="#eee" stroke="#bbb"/></svg>
<div class="a" style="left:851px;top:655px;width:1px;height:14px;background:#e5e5e5;"></div>
<div class="a" style="left:1864px;top:650px;width:23px;height:23px;background:#cce8ff;border:1px solid #26a0da"></div>
<svg class="a" style="left:1868px;top:655px;" width="16" height="12" viewBox="0 0 16 12"><rect x="0.5" y="0.5" width="4" height="11" fill="#fff" stroke="#888"/><path d="M6 2H9M11 2H15M6 6H9M11 6H15M6 10H9M11 10H15" stroke="#777" stroke-width="1"/></svg>
<svg class="a" style="left:1890px;top:655px;" width="15" height="12" viewBox="0 0 15 12"><rect x="0.5" y="0.5" width="14" height="11" fill="#fff" stroke="#888"/><rect x="2" y="2" width="11" height="8" fill="#6db6e8"/><path d="M2 7L6 5.5L13 8V10H2Z" fill="#2c3f47"/></svg>
<div class="a" style="left:147px;top:1078px;width:48px;height:2px;background:#a8a8a8;"></div>
<div class="a" style="left:298px;top:1078px;width:40px;height:2px;background:#a0a0a0;"></div>
<div class="a" style="left:347px;top:1078px;width:40px;height:2px;background:#a0a0a0;"></div>
<div class="a" style="left:396px;top:1078px;width:40px;height:2px;background:#a0a0a0;"></div>
<div class="a" style="left:445px;top:1078px;width:40px;height:2px;background:#a0a0a0;"></div>
<svg class="a" style="left:16px;top:1052px;" width="17" height="17" viewBox="0 0 17 17"><path d="M0 2.3L7 1.3V8H0Z M8 1.2L17 0V8H8Z M0 9H7V15.7L0 14.7Z M8 9H17V17L8 15.8Z" fill="#fff"/></svg>
<svg class="a" style="left:63px;top:1049px;" width="18" height="20" viewBox="0 0 18 20"><circle cx="10.5" cy="7" r="5.5" stroke="#fff" stroke-width="1.3" fill="none"/><path d="M6.6 10.9L1 17.5" stroke="#fff" stroke-width="1.5"/></svg>
<svg class="a" style="left:112px;top:1051px;" width="16" height="16" viewBox="0 0 16 16"><path d="M0.5 1.5H10.5M0.5 14.5H10.5M2 4.5H9.5V11.5H2Z M13.5 0V2.5M13.5 5V16" stroke="#fff" stroke-width="1.2" fill="none"/><rect x="12" y="2.5" width="3" height="2.5" fill="#fff"/></svg>
<svg class="a" style="left:160px;top:1050px;" width="22" height="19" viewBox="0 0 22 19"><path d="M0 2H7L9 0H22V18H0Z" fill="#f7d06b"/><rect x="0" y="3" width="22" height="15" fill="#fbe28f"/><path d="M4.5 18V10H17.5V18H14V13.5H8V18Z" fill="#27a6e5"/><rect x="1.5" y="1" width="5" height="1.5" fill="#fff"/></svg>
<svg class="a" style="left:207px;top:1047px;" width="24" height="24" viewBox="0 0 24 24"><path d="M6 7V5A6 6 0 0 1 18 5V7" stroke="#fff" stroke-width="1.5" fill="none"/><path d="M1 7H23V22A1 1 0 0 1 22 23H2A1 1 0 0 1 1 22Z" fill="#fff"/><rect x="6" y="10" width="5.5" height="5" fill="#e2521d"/><rect x="12.5" y="10" width="5.5" height="5" fill="#7cb62f"/><rect x="6" y="16" width="5.5" height="5" fill="#1da1f1"/><rect x="12.5" y="16" width="5.5" height="5" fill="#f5b80a"/></svg>
<svg class="a" style="left:257px;top:1049px;" width="24" height="20" viewBox="0 0 24 20"><path d="M0 6L12 0L24 6V20H0Z" fill="#fff"/><path d="M0 6L12 13L24 6M12 13L17 17" stroke="#0b0e17" stroke-width="1.2" fill="none"/></svg>
<svg class="a" style="left:307px;top:1049px;" width="23" height="23" viewBox="0 0 23 23"><path d="M11.5 11.5L1.97 6.00A11 11 0 0 1 21.03 6.00Z" fill="#db4437"/><path d="M11.5 11.5L21.03 6.00A11 11 0 0 1 11.50 22.50Z" fill="#ffcd40"/><path d="M11.5 11.5L11.50 22.50A11 11 0 0 1 1.97 6.00Z" fill="#0f9d58"/><circle cx="11.5" cy="11.5" r="5.2" fill="#fff"/><circle cx="11.5" cy="11.5" r="4.1" fill="#4285f4"/></svg>
<svg class="a" style="left:355px;top:1048px;" width="24" height="24" viewBox="0 0 24 24"><circle cx="12" cy="12" r="12" fill="#1ed760"/><path d="M5 8.5Q12 6 19.5 9.5M6 12.3Q12 10.5 18.3 13.3M7 15.8Q12 14.5 17 16.8" stroke="#0b0e17" stroke-width="1.8" fill="none" stroke-linecap="round"/></svg>
<svg class="a" style="left:404px;top:1051px;" width="24" height="19" viewBox="0 0 24 19"><rect x="1" y="1" width="22" height="5" fill="#a42b9a"/><rect x="1" y="7" width="22" height="5" fill="#2649b8"/><rect x="1" y="13" width="22" height="5" fill="#1e9a3a"/><path d="M1 1L4 0V18L1 19Z" fill="#ddd"/><path d="M12 0V19M15 0V19" stroke="#c8922b" stroke-width="1.2"/></svg>
<svg class="a" style="left:456px;top:1053px;" width="21" height="18" viewBox="0 0 21 18"><path d="M2 0H18V13H2L0 11V2Z" fill="#41cd52"/><text x="3.5" y="10" font-family="Liberation Sans" font-size="9" font-weight="bold" fill="#fff">Qt</text><path d="M11 17Q13 11 20 9Q19 15 11 17Z" fill="#d9d9d9"/></svg>
<svg class="a" style="left:1663px;top:1052px;" width="16" height="16" viewBox="0 0 16 16"><circle cx="5.5" cy="8" r="2.5" stroke="#fff" fill="none"/><path d="M1 15Q1 11 5.5 11Q10 11 10 15" stroke="#fff" fill="none"/><circle cx="11" cy="3.5" r="2.5" stroke="#fff" fill="none"/><path d="M8 9Q9 6.5 11 6.5Q15 6.5 15 11" stroke="#fff" fill="none"/></svg>
<svg class="a" style="left:1700px;top:1054px;" width="13" height="8" viewBox="0 0 13 8"><path d="M0.5 7.5L6.5 1L12.5 7.5" stroke="#fff" stroke-width="1.1" fill="none"/></svg>
<svg class="a" style="left:1723px;top:1053px;" width="16" height="14" viewBox="0 0 16 14"><rect x="0.5" y="0.5" width="15" height="10" stroke="#fff" fill="none"/><path d="M8 11V13.5M4 13.5H12" stroke="#fff"/><rect x="1" y="1" width="3.5" height="3" fill="#fff"/></svg>
<svg class="a" style="left:1746px;top:1053px;" width="17" height="14" viewBox="0 0 17 14"><path d="M1 5H4L8 1V13L4 9H1Z" stroke="#fff" fill="none"/><path d="M10.5 4.5Q12 7 10.5 9.5M12.5 2.5Q15 7 12.5 11.5M14.5 1Q17.5 7 14.5 13" stroke="#fff" fill="none"/></svg>
<svg class="a" style="left:1878px;top:1052px;" width="23" height="24" viewBox="0 0 23 24"><path d="M0 0H17V12H6L3 15V12H0Z" fill="#fff"/><path d="M3 3.5H14M3 6H14M3 8.5H11" stroke="#0b0e17" stroke-width="0.8"/><circle cx="16" cy="14.5" r="7" fill="#2b2d33" stroke="#6d6f74"/><text x="16" y="19" text-anchor="middle" font-family="Liberation Sans" font-weight="bold" font-size="11" fill="#fff">1</text></svg>
<div class="a" style="left:1914px;top:1040px;width:1px;height:40px;background:#5a5c62;"></div>
<svg class="a" style="left:1879px;top:1024px;" width="9" height="5" viewBox="0 0 9 5"><path d="M0 5L4.5 0L9 5Z" fill="#d0d0d0"/></svg>
<svg class="a" style="left:1901px;top:1022px;" width="12" height="11" viewBox="0 0 12 11"><rect x="0.5" y="0.5" width="11" height="10" fill="#404244" stroke="#d8d8d8"/><rect x="7" y="0" width="5" height="11" fill="#d0d0d0"/></svg>
<svg class="a" style="left:1056px;top:1021px;" width="8" height="13" viewBox="0 0 8 13"><path d="M0 5L4 0L8 5Z M0 8L4 13L8 8Z" fill="#c8c8c8"/></svg>
<svg class="a" style="left:1907px;top:1003px;" width="10" height="6" viewBox="0 0 10 6"><path d="M0.5 0.5L5.0 5.5L9.5 0.5" stroke="#555" stroke-width="1.6" fill="none"/></svg>
</body></html>
